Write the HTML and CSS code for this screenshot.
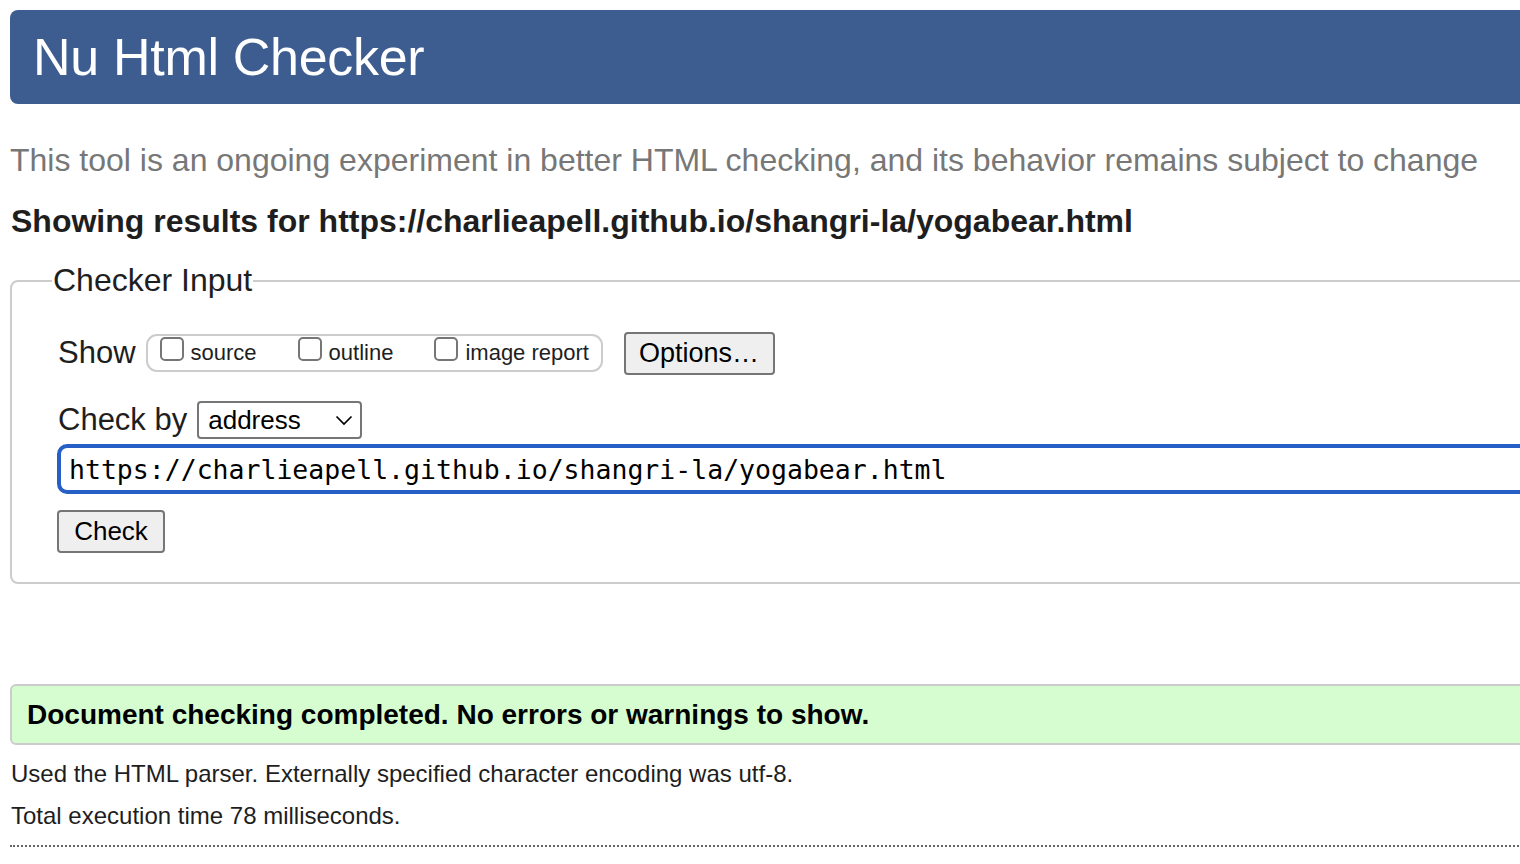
FILE: index.html
```html
<!DOCTYPE html>
<html lang="en">
<head>
<meta charset="utf-8">
<title>Nu Html Checker</title>
<link rel="stylesheet" href="styles.css">
</head>
<body>
<div class="page">
  <header class="banner"><h1>Nu Html Checker</h1></header>
  <p class="intro">This tool is an ongoing experiment in better HTML checking, and its behavior remains subject to change</p>
  <p class="showing">Showing results for https://charlieapell.github.io/shangri-la/yogabear.html</p>
  <fieldset class="checker">
    <legend>Checker Input</legend>
    <div class="fs-body">
      <div class="row show-row">
        <span class="lbl">Show</span>
        <div class="optgroup">
          <label class="opt"><span class="box"></span>source</label>
          <label class="opt"><span class="box"></span>outline</label>
          <label class="opt last"><span class="box"></span>image report</label>
        </div>
        <button class="btn options">Options…</button>
      </div>
      <div class="row by-row">
        <span class="lbl">Check by</span>
        <div class="select">address
          <svg class="chev" width="18" height="11" viewBox="0 0 18 11"><path d="M1.5 1.5 L9 9 L16.5 1.5" fill="none" stroke="#000" stroke-width="1.7"/></svg>
        </div>
      </div>
      <div class="url">https://charlieapell.github.io/shangri-la/yogabear.html</div>
      <button class="btn check">Check</button>
    </div>
  </fieldset>
  <div class="success">Document checking completed. No errors or warnings to show.</div>
  <p class="details">Used the HTML parser. Externally specified character encoding was utf-8.</p>
  <p class="details time">Total execution time 78 milliseconds.</p>
  <hr class="dots">
</div>
</body>
</html>
```
FILE: styles.css
```css
html, body {
  margin: 0;
  padding: 0;
  overflow: hidden;
  background: #fff;
}
body {
  font-family: "Liberation Sans", Arial, sans-serif;
  color: #1e1e1e;
}
.page {
  width: 1700px;
  padding: 10px 0 0 10px;
}
.banner {
  background: #3d5d91;
  border-radius: 8px;
  height: 94px;
  display: flex;
  align-items: center;
}
.banner h1 {
  margin: 0 0 0 23px;
  font-weight: normal;
  font-size: 52px;
  color: #fff;
  letter-spacing: -0.3px;
}
.intro {
  margin: 36px 0 0 0;
  font-size: 32px;
  line-height: 40px;
  color: #777;
}
.showing {
  margin: 21px 0 0 1px;
  font-size: 32px;
  font-weight: bold;
  line-height: 40px;
  color: #1e1e1e;
}
.checker {
  margin: 21px 0 0 0;
  border: 2px solid #ccc;
  border-radius: 8px;
  padding: 0;
}
.checker legend {
  font-size: 32px;
  padding: 0 1px;
  margin-left: 40px;
  color: #1e1e1e;
}
.fs-body {
  padding: 32px 0 29px 46px;
}
.row {
  display: flex;
  align-items: center;
}
.lbl {
  font-size: 31px;
  color: #1e1e1e;
}
.show-row { height: 44px; }
.optgroup {
  margin-left: 10px;
  border: 2px solid #ccc;
  border-radius: 11px;
  width: 457px;
  box-sizing: border-box;
  height: 38px;
  display: flex;
  align-items: center;
  padding-left: 12px;
}
.opt {
  display: flex;
  align-items: center;
  font-size: 22px;
  color: #1e1e1e;
  margin-right: 41px;
  white-space: nowrap;
}
.opt.last { margin-right: 0; }
.box {
  width: 24px;
  height: 24px;
  border: 2px solid #767676;
  border-radius: 5px;
  box-sizing: border-box;
  margin-right: 7px;
  position: relative;
  top: -4px;
}
.btn {
  font-family: "Liberation Sans", Arial, sans-serif;
  background: #efefef;
  border: 2px solid #767676;
  border-radius: 4px;
  color: #000;
  padding: 0;
}
.options {
  margin-left: 21px;
  width: 151px;
  height: 43px;
  font-size: 27px;
}
.by-row { margin-top: 26px; }
.select {
  margin-left: 10px;
  width: 165px;
  height: 38px;
  border: 2px solid #767676;
  border-radius: 4px;
  box-sizing: border-box;
  font-size: 26px;
  color: #000;
  display: flex;
  align-items: center;
  padding-left: 9px;
  position: relative;
}
.chev {
  position: absolute;
  right: 7px;
  top: 12px;
}
.url {
  margin-top: 5px;
  margin-left: -1px;
  height: 50px;
  border: 4px solid #2660c6;
  border-radius: 10px;
  box-sizing: border-box;
  font-family: "DejaVu Sans Mono", Menlo, monospace;
  font-size: 26.5px;
  color: #000;
  display: flex;
  align-items: center;
  padding-left: 8px;
}
.check {
  margin-top: 16px;
  margin-left: -1px;
  width: 108px;
  height: 43px;
  font-size: 26px;
}
.success {
  margin-top: 100px;
  height: 61px;
  box-sizing: border-box;
  background: #d5fdd0;
  border: 2px solid #ccc;
  border-radius: 6px;
  display: flex;
  align-items: center;
  padding-left: 15px;
  font-size: 28px;
  font-weight: bold;
  color: #000;
}
.details {
  margin: 15px 0 0 1px;
  font-size: 24px;
  line-height: 28px;
  color: #1e1e1e;
}
.details.time { margin-top: 14px; }
.dots {
  margin: 15px 0 0 0;
  border: 0;
  border-top: 2px dotted #666;
  height: 0;
}
```
